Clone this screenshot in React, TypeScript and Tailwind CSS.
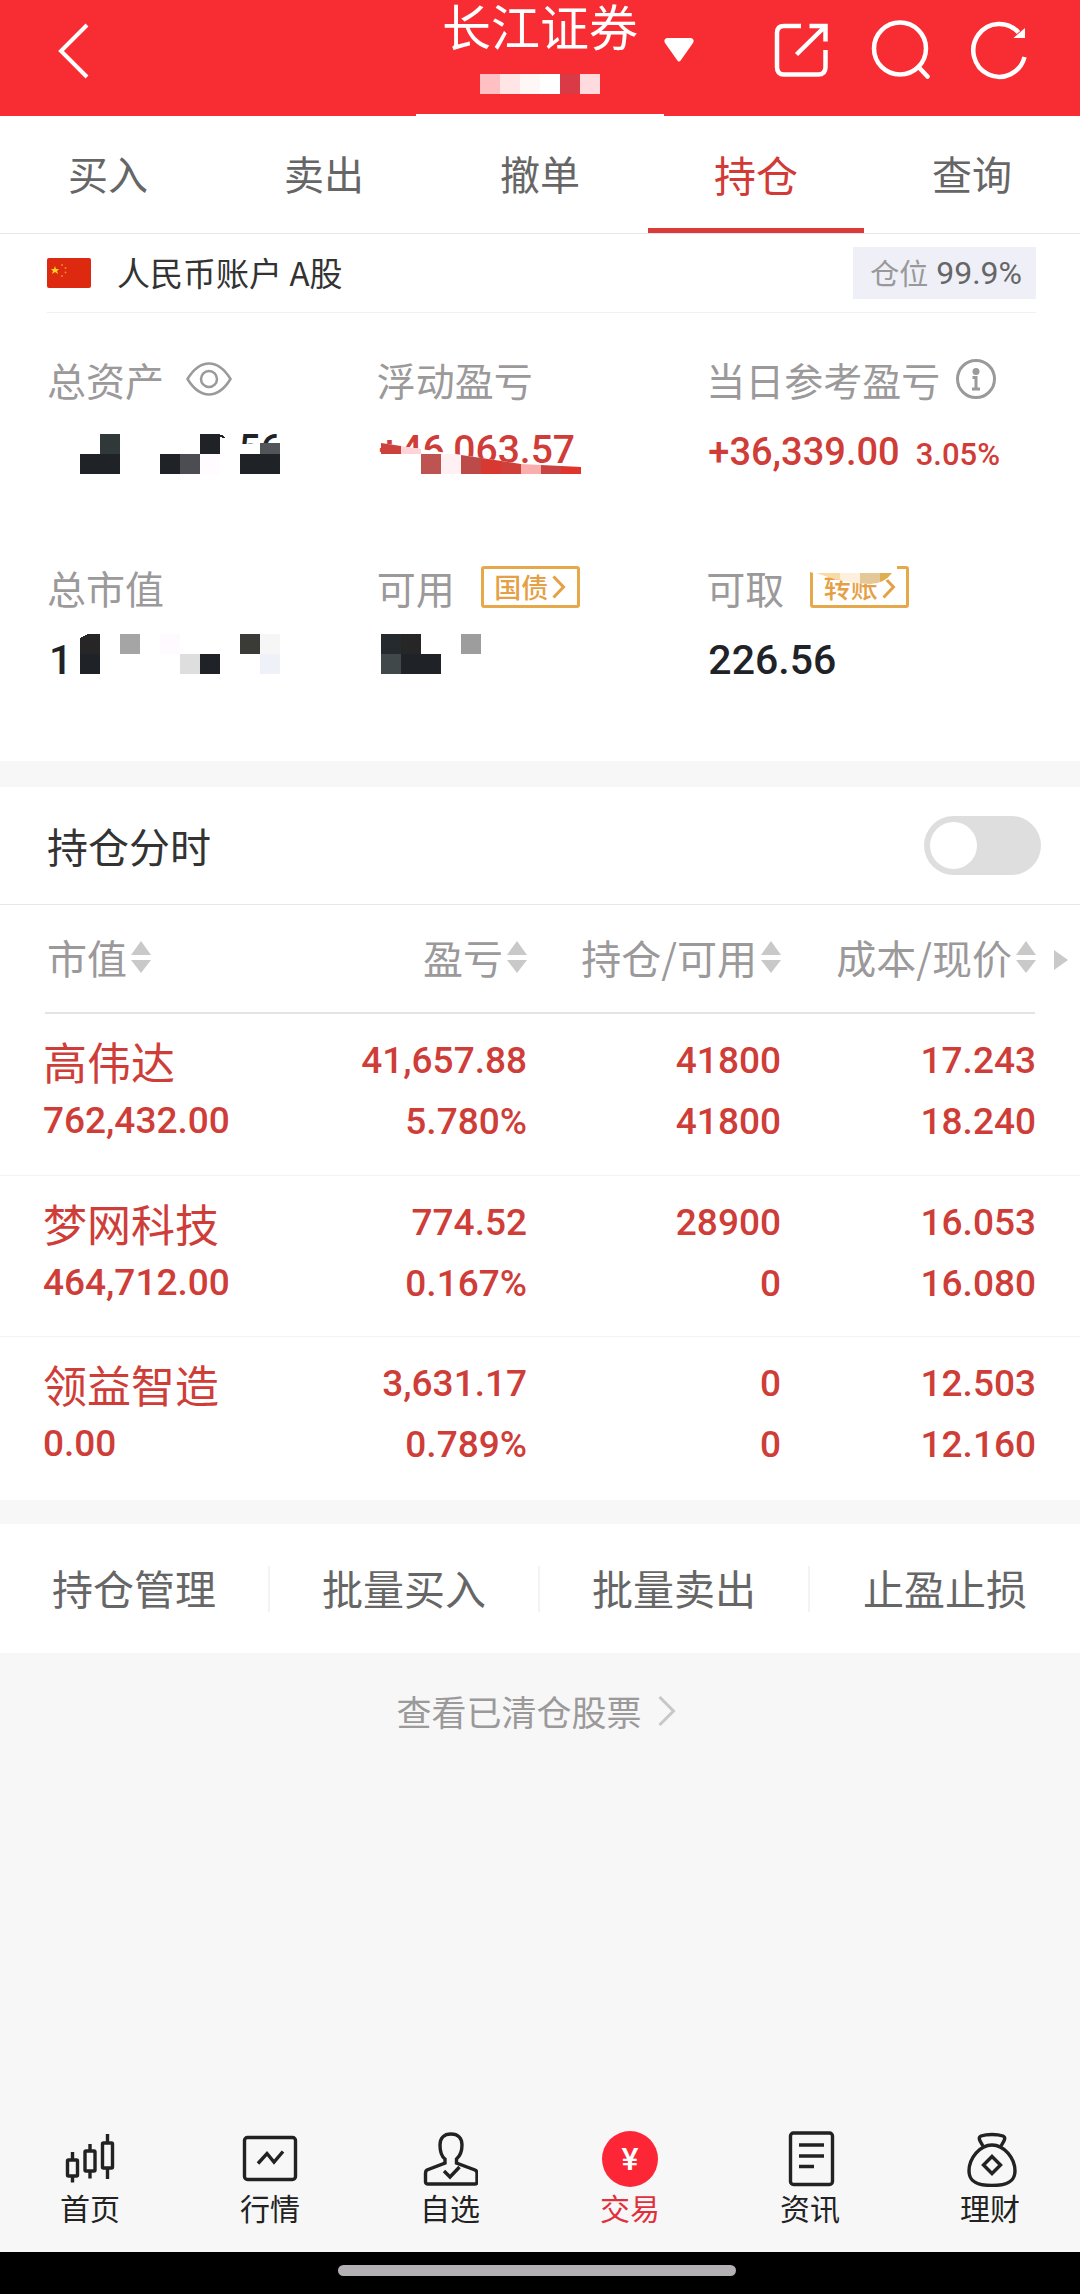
import React, { useState } from 'react';

type Cell = [x: number, y: number, w: number, h: number, color: string];

interface Holding {
  name: string;
  value: string;
  profit: string;
  rate: string;
  held: string;
  usable: string;
  cost: string;
  price: string;
}

const tabs = ['买入', '卖出', '撤单', '持仓', '查询'];

const holdings: Holding[] = [
  { name: '高伟达', value: '762,432.00', profit: '41,657.88', rate: '5.780%', held: '41800', usable: '41800', cost: '17.243', price: '18.240' },
  { name: '梦网科技', value: '464,712.00', profit: '774.52', rate: '0.167%', held: '28900', usable: '0', cost: '16.053', price: '16.080' },
  { name: '领益智造', value: '0.00', profit: '3,631.17', rate: '0.789%', held: '0', usable: '0', cost: '12.503', price: '12.160' },
];

const actions = ['持仓管理', '批量买入', '批量卖出', '止盈止损'];

// Pixelated cells that hide the private amounts
const assetCells: Cell[] = [
  [53, 12, 20, 20, '#30383a'],
  [33, 32, 40, 20, '#1f2328'],
  [153, 12, 20, 20, '#1f2328'],
  [113, 32, 20, 20, '#1f2328'],
  [133, 32, 20, 20, '#4b4d53'],
  [153, 32, 20, 20, '#fffbff'],
  [213, 21, 20, 11, '#515459'],
  [193, 32, 40, 20, '#1f2328'],
];

const profitCells: Cell[] = [
  [4, 12, 20, 20, '#cc413d'],
  [24, 12, 20, 20, '#fdd5d8'],
  [44, 32, 20, 20, '#be5451'],
  [64, 32, 20, 20, '#fef0f3'],
  [84, 32, 20, 20, '#bc4a48'],
  [104, 32, 20, 20, '#d7382f'],
  [124, 32, 20, 20, '#cf403a'],
  [144, 32, 20, 20, '#f9adad'],
  [164, 32, 20, 20, '#c74344'],
  [184, 32, 20, 20, '#e0342d'],
];

const marketCells: Cell[] = [
  [33, 24, 20, 20, '#1f2328'],
  [73, 4, 20, 20, '#a5a5a5'],
  [113, 4, 20, 20, '#fefaff'],
  [133, 24, 20, 20, '#dedede'],
  [153, 24, 20, 20, '#1f2328'],
  [193, 4, 20, 20, '#3a3b37'],
  [213, 4, 20, 20, '#f6f6f6'],
  [213, 24, 20, 20, '#eef1f7'],
];

const usableCells: Cell[] = [
  [4, 4, 20, 20, '#252a2e'],
  [24, 4, 20, 20, '#262626'],
  [4, 24, 20, 20, '#40484a'],
  [24, 24, 40, 20, '#1f2328'],
  [84, 4, 20, 20, '#9d9d9d'],
];

const Cells: React.FC<{ cells: Cell[] }> = ({ cells }) => (
  <>
    {cells.map(([x, y, w, h, color]) => (
      <rect key={`${x}-${y}`} x={x} y={y} width={w} height={h} fill={color} />
    ))}
  </>
);

const Mask: React.FC<{ children: React.ReactNode }> = ({ children }) => (
  <svg className="absolute top-0 left-0 h-14 w-60" viewBox="0 0 240 56" shapeRendering="crispEdges" aria-hidden="true">
    {children}
  </svg>
);

const SortArrows: React.FC = () => (
  <svg className="h-8 w-5 shrink-0" viewBox="0 0 20 32" fill="#c9c9c9" aria-hidden="true">
    <path d="M10 0 20 14H0ZM0 19H20L10 32Z" />
  </svg>
);

const TagLink: React.FC<{ text: string; children?: React.ReactNode }> = ({ text, children }) => (
  <a href="#" className="relative ml-[26px] flex h-[42px] w-[99px] items-center justify-center gap-1 rounded-[3px] border-[3px] border-[#e5a94c] text-[27px] leading-8 font-medium text-[#e5a045]">
    {text}
    <svg className="h-6 w-3.5" viewBox="0 0 14 24" fill="none" stroke="#e5a045" strokeWidth="3" aria-hidden="true">
      <path d="M1.5 1.5 11.5 12 1.5 22.5" />
    </svg>
    {children}
  </a>
);

interface StatProps {
  label: string;
  extra?: React.ReactNode;
  children: React.ReactNode;
}

const Stat: React.FC<StatProps> = ({ label, extra, children }) => (
  <div>
    <dt className="flex h-14 items-center pb-0.5 text-[39px] leading-[54px] whitespace-nowrap text-[#9b999a]">
      {label}
      {extra}
    </dt>
    <dd className="relative mt-3.5 h-14 pl-0.5 font-['Roboto',sans-serif] leading-[60px] font-medium whitespace-nowrap">{children}</dd>
  </div>
);

const Header: React.FC = () => (
  <header className="relative grid h-[116px] grid-cols-[1fr_auto_1fr] items-start bg-[#f82c33] text-white">
    <div className="flex pt-5 pl-11">
      <button type="button" aria-label="返回">
        <svg className="size-[60px]" viewBox="0 0 60 60" fill="none" stroke="currentColor" strokeWidth="4">
          <path d="M43 5 17 31 43 57" />
        </svg>
      </button>
    </div>
    <div className="flex flex-col items-center">
      <h1 className="text-[49px] leading-[50px]">长江证券</h1>
      <svg className="mt-6 h-5 w-[120px]" viewBox="0 0 120 20" shapeRendering="crispEdges" aria-hidden="true">
        <Cells
          cells={[
            [0, 0, 20, 20, '#ffc0c4'],
            [20, 0, 20, 20, '#ffe5e6'],
            [40, 0, 20, 20, '#fff6f6'],
            [60, 0, 20, 20, '#ffffff'],
            [80, 0, 20, 20, '#d93a46'],
            [100, 0, 20, 20, '#ffdbe0'],
          ]}
        />
      </svg>
    </div>
    <div className="flex items-center pt-5 pr-[51px] pl-[26px]">
      <button type="button" aria-label="切换账户">
        <svg className="h-6 w-[30px]" viewBox="0 0 30 24" fill="currentColor">
          <path d="M3 0H27Q31 1 29 5L17 22Q15 25 13 22L1 5Q-1 1 3 0Z" />
        </svg>
      </button>
      <div className="ml-auto flex gap-[39px]">
        <button type="button" aria-label="分享">
          <svg className="size-[60px]" viewBox="0 0 60 60" fill="none" stroke="currentColor" strokeWidth="4.5">
            <path d="M30 6H13Q6 6 6 13V47Q6 54.5 13 54.5H47Q54.5 54.5 54.5 47V30" />
            <path d="M38.5 6H54.5V21.5M54 6.5 25.5 34.5" />
          </svg>
        </button>
        <button type="button" aria-label="搜索">
          <svg className="size-[60px]" viewBox="0 0 60 60" fill="none" stroke="currentColor" strokeWidth="4.5" strokeLinecap="round">
            <circle cx="30" cy="28.5" r="26" />
            <path d="M48.5 47 57.5 56.5" />
          </svg>
        </button>
        <button type="button" aria-label="刷新">
          <svg className="size-[60px]" viewBox="0 0 60 60" fill="none" stroke="currentColor" strokeWidth="4.5">
            <path d="M55.5 37A26 26.5 0 1 1 49.5 12.5" />
            <path d="M56 8V18H44.5Z" fill="currentColor" stroke="none" />
          </svg>
        </button>
      </div>
    </div>
    <div className="absolute bottom-0 left-1/2 h-0.5 w-[248px] -translate-x-1/2 bg-white" />
  </header>
);

const Overview: React.FC = () => (
  <dl className="grid grid-cols-3 gap-y-[82px] bg-white pt-[39px] pr-11 pb-[75px] pl-[47px] text-[#1f2328]">
    <Stat
      label="总资产"
      extra={
        <button type="button" aria-label="隐藏金额" className="ml-[22px]">
          <svg className="h-[34px] w-[46px]" viewBox="0 0 46 34" fill="none" stroke="#9b999a" strokeWidth="2.5">
            <path d="M1.5 17C8 6.5 15 1.5 23 1.5S38 6.5 44.5 17C38 27.5 31 32.5 23 32.5S8 27.5 1.5 17Z" />
            <circle cx="23" cy="17" r="8" />
          </svg>
        </button>
      }
    >
      <span className="block w-[233px] text-right text-[38px] leading-[54px]">56</span>
      <Mask>
        <path d="M190 22H240V56H190Z" fill="#fff" />
        <Cells cells={assetCells} />
        <path d="M153 12 167 14Q174 10 178 16L172 15 165 17Z" fill="#1f2328" />
      </Mask>
    </Stat>
    <Stat label="浮动盈亏">
      <span className="block text-[39px] leading-[56px] text-[#d03c37]">+46,063.57</span>
      <Mask>
        <clipPath id="profitMask">
          <path d="M4 21 44 27 84 33 144 42 184 44 204 45V52H4Z" />
        </clipPath>
        <g clipPath="url(#profitMask)">
          <rect x="4" y="12" width="200" height="40" fill="#fff" />
          <Cells cells={profitCells} />
        </g>
      </Mask>
    </Stat>
    <Stat
      label="当日参考盈亏"
      extra={
        <button type="button" aria-label="说明" className="ml-4">
          <svg className="size-10" viewBox="0 0 40 40" fill="none" stroke="#9b999a" strokeWidth="3">
            <circle cx="20" cy="20" r="18.5" />
            <circle cx="20" cy="12.5" r="3.5" fill="#9b999a" stroke="none" />
            <path d="M16.5 18.5H20V30M16 30H24" />
          </svg>
        </button>
      }
    >
      <span className="text-[38px] text-[#d03c37]">+36,339.00</span>
      <span className="ml-4 text-[31px] text-[#d03c37]">3.05%</span>
    </Stat>
    <Stat label="总市值">
      <span className="text-[41px]">1</span>
      <Mask>
        <path d="M33 8 41 4H53V24H33Z" fill="#262626" />
        <Cells cells={marketCells} />
      </Mask>
    </Stat>
    <Stat label="可用" extra={<TagLink text="国债" />}>
      <Mask>
        <Cells cells={usableCells} />
      </Mask>
    </Stat>
    <Stat
      label="可取"
      extra={
        <TagLink text="转账">
          <svg className="absolute -top-[3px] -left-[3px] h-[30px] w-[99px]" viewBox="0 0 99 30" aria-hidden="true">
            <path d="M0 0H87V3L82 10Q76 17 62 18 40 18 0 6Z" fill="#fff" />
            <clipPath id="tagMask">
              <path d="M6 7H82Q74 18 60 18 36 18 6 7Z" />
            </clipPath>
            <g clipPath="url(#tagMask)">
              <Cells
                cells={[
                  [0, 0, 30, 30, '#fadba8'],
                  [30, 0, 20, 30, '#fef0dc'],
                  [50, 0, 20, 30, '#e4c898'],
                  [70, 0, 20, 30, '#dfae50'],
                ]}
              />
            </g>
          </svg>
        </TagLink>
      }
    >
      <span className="text-[41px]">226.56</span>
    </Stat>
  </dl>
);

const HoldingsTable: React.FC = () => (
  <table className="w-full table-fixed border-collapse bg-white">
    <colgroup>
      <col />
      <col className="w-[254px]" />
      <col className="w-[254px]" />
      <col className="w-[299px]" />
    </colgroup>
    <thead>
      <tr className="h-[109px] bg-[linear-gradient(#e4e4e4,#e4e4e4)] bg-[length:calc(100%-90px)_2px] bg-bottom bg-no-repeat text-[40px] leading-[52px] text-[#9b999a]">
        {['市值', '盈亏', '持仓/可用', '成本/现价'].map((title, i) => (
          <th key={title} scope="col" className={i === 0 ? 'pb-1.5 pl-[47px] font-normal' : i === 3 ? 'relative pr-11 pb-1.5 font-normal' : 'pb-1.5 font-normal'}>
            <button type="button" className={`flex items-center gap-1 whitespace-nowrap ${i === 0 ? '' : 'ml-auto'}`}>
              {title}
              <SortArrows />
            </button>
            {i === 3 && (
              <svg className="absolute top-1/2 right-3 h-5 w-3.5 -translate-y-1/2" viewBox="0 0 14 20" fill="#c9c9c9" aria-hidden="true">
                <path d="M0 0 14 10 0 20Z" />
              </svg>
            )}
          </th>
        ))}
      </tr>
    </thead>
    <tbody className="font-['Roboto','Noto_Sans_CJK_SC',sans-serif] text-[37px] leading-[61px] font-medium text-[#cf3d38]">
      {holdings.map((item) => (
        <tr key={item.name} className="h-[161px] border-b border-[#f3f3f3] text-right align-top last:h-[164px] last:border-0">
          <td className="pt-4 pl-[43px] text-left whitespace-nowrap">
            <div className="text-[44px] leading-[70px] font-normal">{item.name}</div>
            <div className="leading-[42px]">{item.value}</div>
          </td>
          <td className="pt-4">
            <div>{item.profit}</div>
            <div>{item.rate}</div>
          </td>
          <td className="pt-4">
            <div>{item.held}</div>
            <div>{item.usable}</div>
          </td>
          <td className="pt-4 pr-11">
            <div>{item.cost}</div>
            <div>{item.price}</div>
          </td>
        </tr>
      ))}
    </tbody>
  </table>
);

const navItems = [
  {
    label: '首页',
    icon: (
      <>
        <path d="M10.5 21V29M10.5 46V51.5M28 13V20M28 41V47.5M45.5 3V12M45.5 37V48" />
        <rect x="5.5" y="29" width="10" height="16" rx="1" />
        <rect x="23" y="20" width="10" height="20" rx="1" />
        <rect x="40.5" y="12" width="10" height="25" rx="1" />
      </>
    ),
  },
  {
    label: '行情',
    icon: (
      <>
        <rect x="2.5" y="6.5" width="51" height="42" rx="3" />
        <path d="M16 32.5 25 22.5 32 31 41 20.5" />
      </>
    ),
  },
  {
    label: '自选',
    icon: (
      <>
        <path d="M23 32V28C19 25 18 20 18 14 18 7 22 3 29 3S40 7 40 14C40 20 38 25 34.5 28V32L53 39Q55 40 55 42V51Q55 53 52.5 53H6Q3.5 53 3.5 51V42Q3.5 40 5 39L23 32V28" />
        <path d="M22 40 28 46 37.5 36" />
      </>
    ),
  },
  { label: '交易', icon: null },
  {
    label: '资讯',
    icon: (
      <>
        <rect x="8.5" y="2" width="42" height="51.5" rx="3" />
        <path d="M17 14H42M17 25H42M17 35.5H32" />
      </>
    ),
  },
  {
    label: '理财',
    icon: (
      <>
        <path d="M21 15C19 11 15 7 19 5 25 3 35 3 41 5 45 7 41 11 39 15" />
        <path d="M30 14C18 14 7 27 7 40 7 50 14 54.5 30 54.5S53 50 53 40C53 27 42 14 30 14Z" />
        <path d="M30 25.5 38.5 34 30 42.5 21.5 34Z" />
      </>
    ),
  },
];

const BottomNav: React.FC = () => (
  <nav className="mt-auto grid grid-cols-6 pb-[25px] text-[30px] leading-10">
    {navItems.map((item) => (
      <a key={item.label} href="#" className={`flex flex-col items-center ${item.icon ? 'text-[#222]' : 'text-[#e0303c]'}`}>
        {item.icon ? (
          <svg className="size-14" viewBox="0 0 56 56" fill="none" stroke="currentColor" strokeWidth="3.4" aria-hidden="true">
            {item.icon}
          </svg>
        ) : (
          <span className="flex size-14 items-center justify-center rounded-full bg-[#fd2636] font-['Roboto',sans-serif] text-[32px] font-medium text-white">¥</span>
        )}
        {item.label}
      </a>
    ))}
  </nav>
);

const App: React.FC = () => {
  const [showChart, setShowChart] = useState(false);

  return (
    <div lang="zh-CN" className="flex min-h-screen flex-col bg-[#f7f7f7] font-['Noto_Sans_CJK_SC',sans-serif]">
      <Header />
      <nav className="flex h-[118px] border-b border-[#e8e8e8] bg-white text-[40px]">
        {tabs.map((tab) => (
          <a
            key={tab}
            href="#"
            className={`flex flex-1 items-center justify-center border-b-[5px] pt-0.5 ${tab === '持仓' ? 'border-[#db3a38] text-[42px] text-[#d23a36]' : 'border-transparent text-[#666]'}`}
          >
            {tab}
          </a>
        ))}
      </nav>

      <div className="bg-white pr-11 pl-[47px]">
        <div className="flex h-[79px] items-center border-b border-[#f0f0f0]">
          <svg className="h-[30px] w-11" viewBox="0 0 44 30" aria-hidden="true">
            <rect width="44" height="30" rx="2" fill="#dd2910" />
            <path d="M8 8 9 11H12L10 13 11 16 8 14 5 16 6 13 4 11H7Z" fill="#ffd21c" />
            <g fill="#f08a1d">
              <circle cx="15" cy="7" r="1" />
              <circle cx="18.5" cy="10" r="1" />
              <circle cx="18.5" cy="14.5" r="1" />
              <circle cx="15" cy="18" r="1" />
            </g>
          </svg>
          <h2 className="ml-[26px] text-[33px] text-[#333]">人民币账户 A股</h2>
          <div className="ml-auto flex h-[52px] w-[183px] items-center justify-end gap-2 bg-[#efeff7] pr-3.5 text-[29px] text-[#999]">
            仓位 <span className="font-['Roboto',sans-serif] text-[32px] text-[#666]">99.9%</span>
          </div>
        </div>
      </div>

      <Overview />

      <div className="mt-[26px] flex h-[118px] items-center justify-between border-b border-[#e8e8e8] bg-white pr-[39px] pl-[47px]">
        <label htmlFor="chart" className="text-[41px] text-[#333]">
          持仓分时
        </label>
        <input
          id="chart"
          type="checkbox"
          role="switch"
          checked={showChart}
          onChange={(e) => setShowChart(e.target.checked)}
          className="flex h-[59px] w-[117px] appearance-none items-center rounded-full bg-[#dedede] px-1.5 before:size-[47px] before:rounded-full before:bg-white checked:justify-end checked:bg-[#db3a38]"
        />
      </div>

      <HoldingsTable />

      <div className="mt-6 grid h-[129px] grid-cols-4 items-center divide-x-2 divide-[#f3f3f3] bg-white text-[41px] leading-[42px] text-[#666]">
        {actions.map((action) => (
          <button key={action} type="button" className="pb-1">
            {action}
          </button>
        ))}
      </div>

      <a href="#" className="mt-8 flex items-center justify-center gap-4 pr-2 text-[35px] text-[#9b999a]">
        查看已清仓股票
        <svg className="h-[30px] w-[18px]" viewBox="0 0 18 30" fill="none" stroke="#c8c6c8" strokeWidth="3" aria-hidden="true">
          <path d="M1.5 1 15.5 15 1.5 29" />
        </svg>
      </a>

      <BottomNav />
      <div className="flex h-[42px] items-center justify-center bg-black pr-1.5 pb-1.5">
        <div className="h-[11px] w-[37%] rounded-full bg-[#b4b1b5]" />
      </div>
    </div>
  );
};

export default App;
